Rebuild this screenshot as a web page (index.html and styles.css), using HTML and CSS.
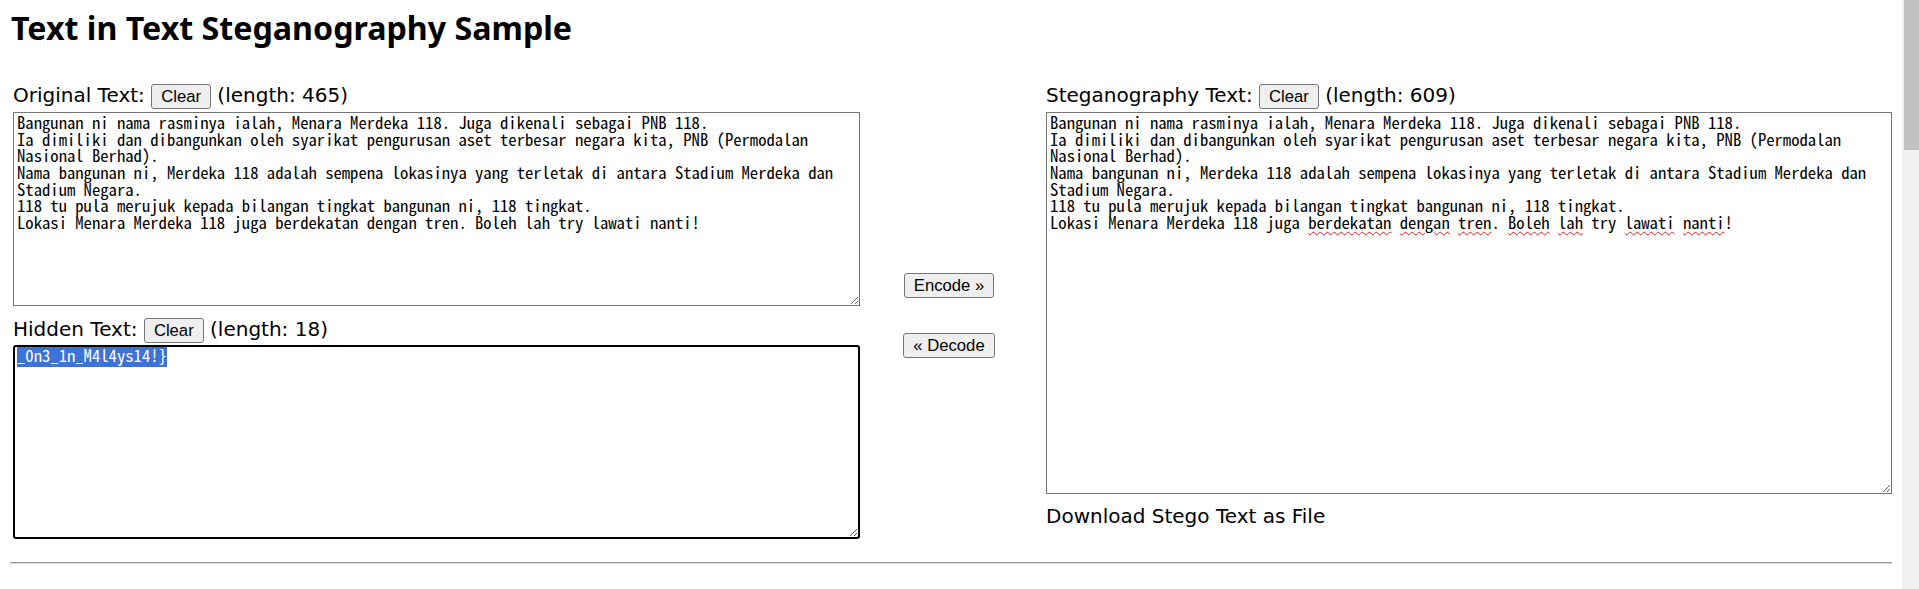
FILE: index.html
```html
<!DOCTYPE html>
<html lang="en">
<head>
<meta charset="utf-8">
<title>Text in Text Steganography Sample</title>
<link rel="stylesheet" href="styles.css">
</head>
<body>
<div class="page">
  <h2 class="title">Text in Text Steganography Sample</h2>
  <div class="main">
    <div class="col col-left">
      <div class="label-row">Original Text: <button class="btn">Clear</button> (length: 465)</div>
      <div class="box box-orig">Bangunan ni nama rasminya ialah, Menara Merdeka 118. Juga dikenali sebagai PNB 118.
Ia dimiliki dan dibangunkan oleh syarikat pengurusan aset terbesar negara kita, PNB (Permodalan
Nasional Berhad).
Nama bangunan ni, Merdeka 118 adalah sempena lokasinya yang terletak di antara Stadium Merdeka dan
Stadium Negara.
118 tu pula merujuk kepada bilangan tingkat bangunan ni, 118 tingkat.
Lokasi Menara Merdeka 118 juga berdekatan dengan tren. Boleh lah try lawati nanti!</div>
      <div class="label-row label-hidden">Hidden Text: <button class="btn">Clear</button> (length: 18)</div>
      <div class="box box-hidden"><span class="sel">_0n3_1n_M4l4ys14!}</span></div>
    </div>
    <div class="col actions">
      <button class="btn">Encode &raquo;</button>
      <button class="btn">&laquo; Decode</button>
    </div>
    <div class="col col-right">
      <div class="label-row">Steganography Text: <button class="btn">Clear</button> (length: 609)</div>
      <div class="box box-stego">Bangunan ni nama rasminya ialah, Menara Merdeka 118. Juga dikenali sebagai PNB 118.
Ia dimiliki dan dibangunkan oleh syarikat pengurusan aset terbesar negara kita, PNB (Permodalan
Nasional Berhad).
Nama bangunan ni, Merdeka 118 adalah sempena lokasinya yang terletak di antara Stadium Merdeka dan
Stadium Negara.
118 tu pula merujuk kepada bilangan tingkat bangunan ni, 118 tingkat.
Lokasi Menara Merdeka 118 juga <span class="sp">berdekatan</span> <span class="sp">dengan</span> <span class="sp">tren</span>. <span class="sp">Boleh</span> <span class="sp">lah</span> try <span class="sp">lawati</span> <span class="sp">nanti</span>!</div>
      <div class="download">Download Stego Text as File</div>
    </div>
  </div>
  <hr class="rule">
</div>
<div class="scrollbar"><div class="thumb"></div></div>
</body>
</html>
```
FILE: styles.css
```css
html, body {
  margin: 0;
}

body {
  padding: 0 10px;
  background: #fff;
  color: #000;
  font-family: "DejaVu Sans", Verdana, sans-serif;
  font-size: 20px;
}

.page {
  width: 1882px;
}

.title {
  font-family: "Noto Sans", "Liberation Sans", sans-serif;
  font-weight: bold;
  font-size: 32.2px;
  line-height: 36px;
  margin: 10px 0 33px 1px;
}

.main {
  display: grid;
  grid-template-columns: 847px 1fr 846px;
  padding-left: 3px;
  align-items: start;
}

.label-row {
  height: 32px;
  line-height: 32px;
  white-space: nowrap;
}

.label-hidden {
  margin-top: 7px;
}

.btn {
  font-family: "Liberation Sans", Arial, sans-serif;
  font-size: 16.67px;
  line-height: 23px;
  height: 25px;
  padding: 0 9px;
  border: 1px solid #767676;
  border-radius: 3px;
  background: #efefef;
  color: #000;
  box-sizing: border-box;
}

.box {
  box-sizing: border-box;
  border: 1px solid #767676;
  padding: 1px 3px;
  margin-top: 1px;
  font-family: "Noto Sans Mono CJK JP", "Liberation Mono", monospace;
  font-size: 16.67px;
  line-height: 16.67px;
  white-space: pre;
  overflow: auto;
  resize: both;
  background: #fff;
}

.box-orig {
  height: 194px;
}

.box-hidden {
  height: 194px;
  margin-top: 0;
  border: 2px solid #000;
  border-radius: 3px;
  padding: 0 2px;
}

.sel {
  background: #3d72d7;
  color: #fff;
}

.box-stego {
  height: 382px;
}

.sp {
  text-decoration: underline wavy #e01b1b;
  text-decoration-thickness: 1px;
  text-underline-offset: 2px;
}

.download {
  margin-top: 7px;
  line-height: 30px;
}

.actions {
  display: flex;
  flex-direction: column;
  align-items: center;
  gap: 35px;
  padding-top: 194px;
  padding-right: 8px;
}

.rule {
  margin: 23px 0 0;
  height: 0;
  border: 0;
  border-top: 1px solid #9a9a9a;
  border-bottom: 1px solid #d6d6d6;
}

.scrollbar {
  position: fixed;
  top: 0;
  right: 0;
  width: 17px;
  height: 100%;
  background: #f1f1f1;
}

.thumb {
  height: 150px;
  margin-left: 2px;
  background: #c1c1c1;
}
```
